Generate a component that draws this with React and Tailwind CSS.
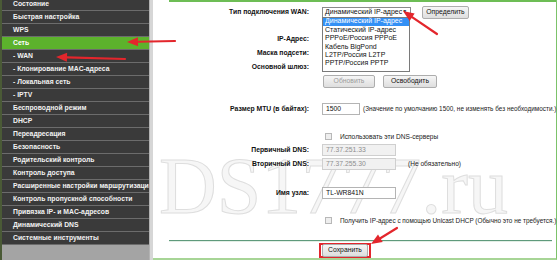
import React from 'react';

const MENU = [
  { label: 'Состояние' },
  { label: 'Быстрая настройка' },
  { label: 'WPS' },
  { label: 'Сеть', active: true },
  { label: '- WAN', sub: true, current: true },
  { label: '- Клонирование MAC-адреса', sub: true },
  { label: '- Локальная сеть', sub: true },
  { label: '- IPTV', sub: true },
  { label: 'Беспроводной режим' },
  { label: 'DHCP' },
  { label: 'Переадресация' },
  { label: 'Безопасность' },
  { label: 'Родительский контроль' },
  { label: 'Контроль доступа' },
  { label: 'Расширенные настройки маршрутизации' },
  { label: 'Контроль пропускной способности' },
  { label: 'Привязка IP- и MAC-адресов' },
  { label: 'Динамический DNS' },
  { label: 'Системные инструменты' },
];

const WAN_TYPES = [
  'Динамический IP-адрес',
  'Статический IP-адрес',
  'PPPoE/Россия PPPoE',
  'Кабель BigPond',
  'L2TP/Россия L2TP',
  'PPTP/Россия PPTP',
];

// красные стрелки поверх скриншота: [x1, y1, x2, y2], остриё в (x2, y2)
const ARROWS = [
  [175, 41, 127, 42],
  [125, 59, 56, 57],
  [437, 34, 403, 11],
  [397, 228, 371, 244],
];

const Arrow = ({ x1, y1, x2, y2 }) => {
  const len = Math.hypot(x2 - x1, y2 - y1);
  const ux = (x2 - x1) / len;
  const uy = (y2 - y1) / len;
  const bx = x2 - ux * 11;
  const by = y2 - uy * 11;
  const head = `${x2},${y2} ${bx - uy * 4.5},${by + ux * 4.5} ${bx + uy * 4.5},${by - ux * 4.5}`;
  return (
    <g>
      <line x1={x1} y1={y1} x2={bx} y2={by} stroke="#e3262c" strokeWidth="2.2" strokeLinecap="round" />
      <polygon points={head} fill="#e3262c" />
    </g>
  );
};

const Sidebar = () => (
  <div className="w-[149px] h-[260px] shrink-0 overflow-hidden bg-[#a4a4a4] border-l-2 border-[#4a5a36]">
    <div className="-mt-[2px]">
      {MENU.map((item) => (
        <div
          key={item.label}
          className={`h-[13px] flex items-center pl-[11px] whitespace-nowrap overflow-hidden border-b border-[#6c6c6c] text-[6.8px] font-bold ${
            item.active ? 'bg-[#5cb22c] text-white' : 'bg-[#3a3a3a] text-[#f2f2f2]'
          } ${item.current ? 'text-[#c9d92c]' : ''}`}
        >
          {item.label}
        </div>
      ))}
    </div>
  </div>
);

const Label = ({ children }) => (
  <div className="w-[157px] shrink-0 pr-[1px] text-right font-bold text-[6.8px] text-[#111] whitespace-nowrap">{children}</div>
);

const Button = ({ children, disabled, className = '' }) => (
  <div
    className={`h-[13px] flex items-center justify-center rounded-[2px] border border-[#adadad] bg-gradient-to-b from-[#f6f6f6] to-[#dedede] text-[6.8px] whitespace-nowrap ${
      disabled ? 'text-[#9a9a9a]' : 'text-[#111]'
    } ${className}`}
  >
    {children}
  </div>
);

const Input = ({ value, disabled, className = '' }) => (
  <div
    className={`h-[12px] flex items-center px-[3px] border text-[6.8px] whitespace-nowrap ${
      disabled ? 'bg-[#f1f1f1] border-[#cfcfcf] text-[#8e8e8e]' : 'bg-white border-[#b4b4b4] text-[#111]'
    } ${className}`}
  >
    {value}
  </div>
);

const Checkbox = () => (
  <div className="w-[7px] h-[7px] ml-[3px] mr-[8px] border border-[#b8b8b8] bg-[#eeeeee] shrink-0" />
);

const Row = ({ label, className = 'h-[14px]', children }) => (
  <div className={`flex items-center ${className}`}>
    <Label>{label}</Label>
    <div className="ml-[12px] flex items-center">{children}</div>
  </div>
);

const Content = () => (
  <div className="relative w-[404px] h-[260px] shrink-0 bg-white border-r border-[#7cc36a] border-b-2 border-b-[#a7d596]">
    {/* водяной знак */}
    <div
      aria-hidden="true"
      className="absolute left-[6px] top-[146px] leading-none text-[80px] text-[#f6f6f6] [-webkit-text-stroke:1px_#dedede] whitespace-nowrap pointer-events-none select-none"
      style={{ fontFamily: '"Liberation Serif", serif' }}
    >
      DS1777.ru
    </div>

    <div className="relative">
      <div className="h-[2px] ml-[16px] bg-[#6dbd55]" />

      <Row label="Тип подключения WAN:" className="h-[20px]">
        <div className="relative">
          <div className="w-[89px] h-[11px] flex items-center justify-between pl-[2px] pr-[4px] border border-[#8a8a8a] bg-white text-[7px] text-[#111] whitespace-nowrap overflow-hidden">
            <span>Динамический IP-адрес</span>
            <span className="text-[5px]">▼</span>
          </div>
          <div className="absolute left-0 top-[10px] w-[88px] pb-[3px] border border-[#7a7a7a] bg-white z-10">
            {WAN_TYPES.map((t, i) => (
              <div
                key={t}
                className={`h-[8.4px] flex items-center pl-[2px] text-[7px] whitespace-nowrap ${
                  i === 0 ? 'bg-[#3390f5] text-white' : 'text-[#111]'
                }`}
              >
                {t}
              </div>
            ))}
          </div>
        </div>
        <Button className="w-[47px] h-[11px] ml-[11px]">Определить</Button>
      </Row>

      <Row label="IP-Адрес:" className="h-[14px] mt-[10px]" />
      <Row label="Маска подсети:" />
      <Row label="Основной шлюз:" />
      <Row label="" className="h-[15px]">
        <Button disabled className="w-[52px] ml-[1px]">Обновить</Button>
        <Button className="w-[54px] ml-[8px]">Освободить</Button>
      </Row>

      <Row label="Размер MTU (в байтах):" className="h-[14px] mt-[13px]">
        <Input value="1500" className="w-[38px]" />
        <span className="ml-[3px] text-[6.4px] text-[#222] whitespace-nowrap">
          (Значение по умолчанию 1500, не изменять без необходимости.)
        </span>
      </Row>

      <Row label="" className="h-[13px] mt-[14px]">
        <Checkbox />
        <span className="text-[6.6px] text-[#222] whitespace-nowrap">Использовать эти DNS-серверы</span>
      </Row>
      <Row label="Первичный DNS:">
        <Input value="77.37.251.33" disabled className="w-[74px]" />
      </Row>
      <Row label="Вторичный DNS:">
        <Input value="77.37.255.30" disabled className="w-[74px]" />
        <span className="ml-[12px] text-[6.6px] text-[#222] whitespace-nowrap">(Не обязательно)</span>
      </Row>

      <Row label="Имя узла:" className="h-[14px] mt-[15px]">
        <Input value="TL-WR841N" className="w-[74px]" />
      </Row>
      <Row label="" className="h-[14px] mt-[14px]">
        <Checkbox />
        <span className="text-[6.4px] text-[#222] whitespace-nowrap">
          Получить IP-адрес с помощью Unicast DHCP (Обычно это не требуется.)
        </span>
      </Row>

      <div className="mt-[12px] ml-[16px] mr-[4px] h-[2px] border-t border-[#5f9a7c] bg-[#e3efe6]" />

      <div className="mt-[1px] ml-[166px] w-[52px] h-[15px] border-2 border-[#e3262c] flex items-center justify-center">
        <Button className="w-[46px] h-[11px]">Сохранить</Button>
      </div>
    </div>
  </div>
);

export default function App() {
  return (
    <div className="relative w-[560px] h-[260px] flex overflow-hidden bg-white" style={{ fontFamily: '"Liberation Sans", Arial, sans-serif' }}>
      <Sidebar />
      <div className="w-[4px] h-[260px] shrink-0 bg-[#d6d6d6] border-l border-[#b3b3b3]" />
      <Content />
      <div className="flex-1 bg-white" />

      <svg className="absolute inset-0 pointer-events-none z-20" width="560" height="260" viewBox="0 0 560 260">
        {ARROWS.map(([x1, y1, x2, y2], i) => (
          <Arrow key={i} x1={x1} y1={y1} x2={x2} y2={y2} />
        ))}
      </svg>
    </div>
  );
}
